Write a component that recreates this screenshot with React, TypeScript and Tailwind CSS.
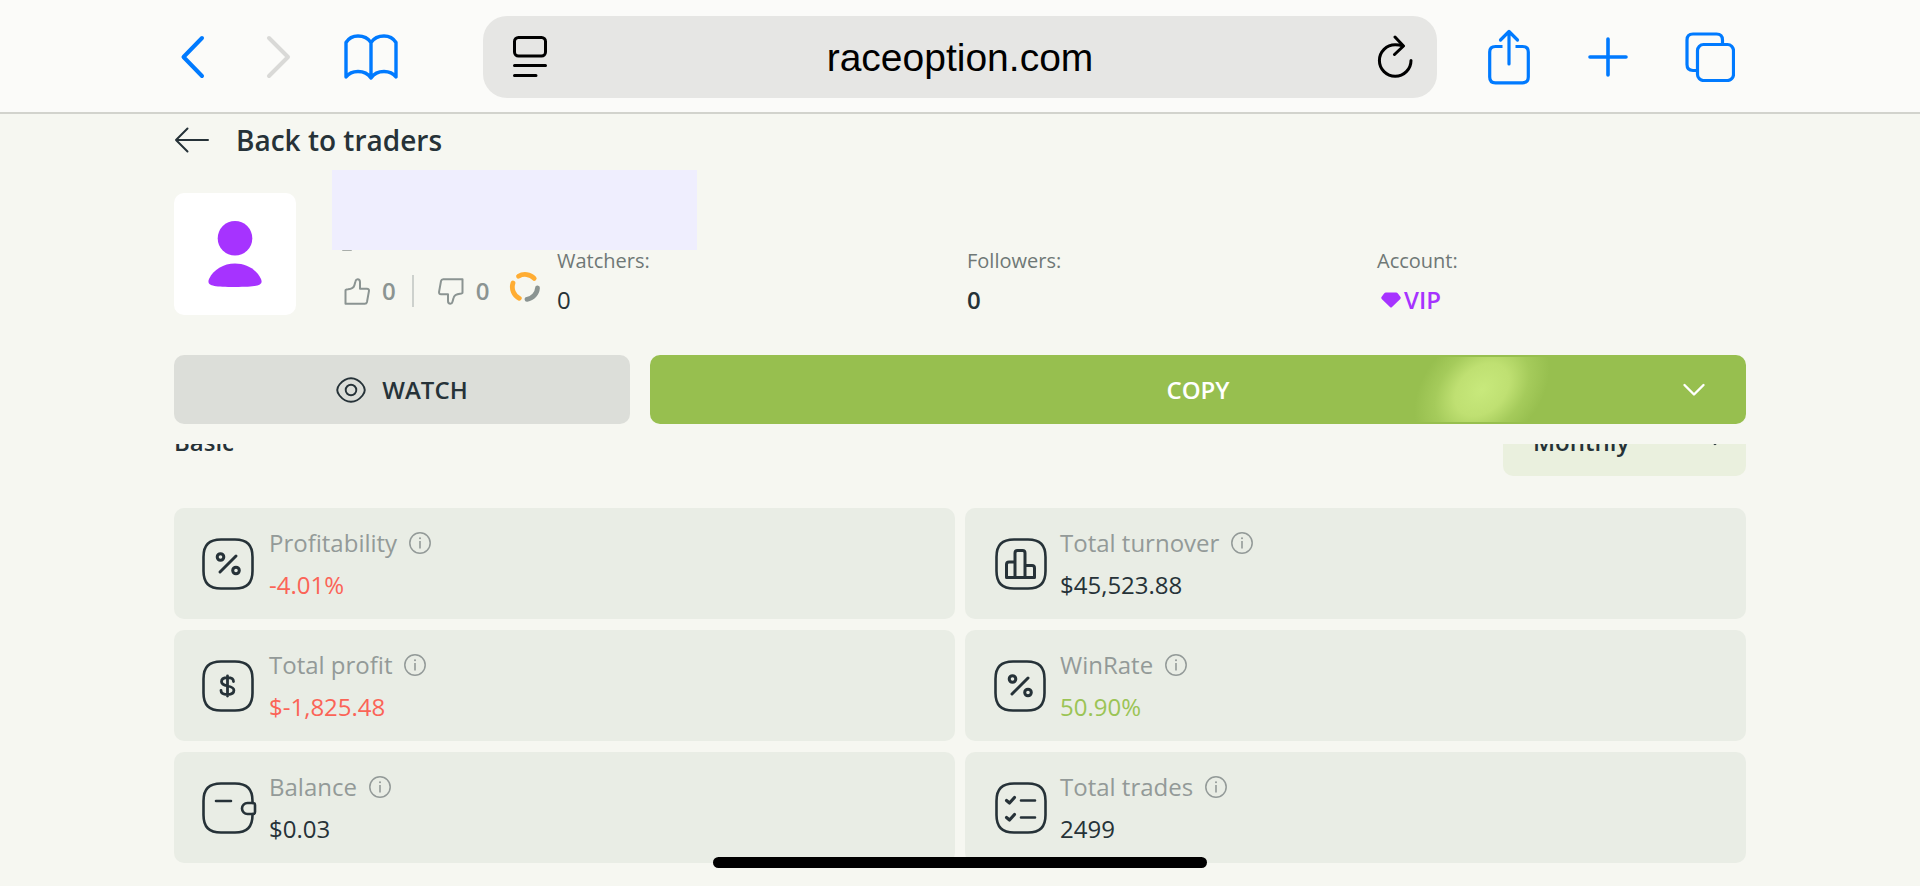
import type { ReactNode } from "react";

const blue = "#007aff";
const ink = "#263238";

function BrowserBar() {
  return (
    <header className="flex h-[114px] items-center border-b-2 border-[#d2d3cd] bg-[#fbfbf9] pl-[174px] pr-[185px] pt-0.5">
      <button aria-label="Back" className="shrink-0">
        <svg width="36" height="50" viewBox="0 0 36 50" fill="none" stroke={blue} strokeWidth="4" strokeLinecap="round" strokeLinejoin="round">
          <path d="M28 6 9.500 25l18.500 19" />
        </svg>
      </button>
      <button aria-label="Forward" className="ml-[51px] shrink-0">
        <svg width="36" height="50" viewBox="0 0 36 50" fill="none" stroke="#d9d9d7" strokeWidth="4" strokeLinecap="round" strokeLinejoin="round">
          <path d="m8 6 19 19L8 44" />
        </svg>
      </button>
      <button aria-label="Bookmarks" className="ml-[47px] shrink-0">
        <svg width="54" height="46" viewBox="0 0 54 46" fill="none" stroke={blue} strokeWidth="3.4" strokeLinecap="round" strokeLinejoin="round">
          <path d="M27 8.500C24 4 19 2 14 2S4.500 4.500 2 8.500V43c3-4 7-5.500 12-5.500s10 2 13 6.500c3-4.500 8-6.500 13-6.500s9 1.500 12 5.500V8.500C49.500 4.500 45 2 40 2s-10 2-13 6.500V44" />
        </svg>
      </button>
      <div className="ml-[85px] flex h-[82px] flex-1 items-center justify-between rounded-[24px] bg-[#e6e6e4] pl-[30px] pr-6">
        <button aria-label="Page settings">
          <svg width="34" height="42" viewBox="0 0 34 42" fill="none" stroke="#000" strokeWidth="3" strokeLinecap="round">
            <rect x="1.500" y="1.500" width="31" height="18.500" rx="4" />
            <path d="M1.500 29.500h31M1.500 39.500h21.500" />
          </svg>
        </button>
        <span className="pr-1 pt-0.5 font-['Liberation_Sans',sans-serif] text-[39px] leading-[48px] text-black">raceoption.com</span>
        <button aria-label="Reload">
          <svg width="36" height="44" viewBox="0 0 36 44" fill="none" stroke="#000" strokeWidth="3" strokeLinecap="round" strokeLinejoin="round">
            <path d="M34 25.500a15.800 15.800 0 1 1-15.800-15.800c2.500 0 5 .3 7.500 1.200" />
            <path d="m18 2 8.500 9-9 8.500" />
          </svg>
        </button>
      </div>
      <button aria-label="Share" className="ml-[51px] shrink-0">
        <svg width="42" height="56" viewBox="0 0 42 56" fill="none" stroke={blue} strokeWidth="3.200" strokeLinecap="round" strokeLinejoin="round">
          <path d="M14.500 17.500H7.500Q1.700 17.500 1.700 23v25q0 5.800 5.800 5.800h27q5.800 0 5.800-5.800V23q0-5.500-5.800-5.500H27.500" strokeLinecap="butt" />
          <path d="M21 35V3M12.500 11 21 2.500l8.500 8.500" />
        </svg>
      </button>
      <button aria-label="New tab" className="ml-[58px] shrink-0">
        <svg width="40" height="40" viewBox="0 0 40 40" stroke={blue} strokeWidth="3.600" strokeLinecap="round">
          <path d="M20 2v36M2 20h36" />
        </svg>
      </button>
      <button aria-label="Tabs" className="ml-[57px] shrink-0">
        <svg width="50" height="50" viewBox="0 0 50 50" fill="none" stroke={blue} strokeWidth="3.200">
          <path d="M37.500 12.500V8q0-6-6-6H8Q2 2 2 8v24.500q0 6 6 6h4.500" />
          <rect x="12.500" y="12.500" width="36" height="36" rx="6" />
        </svg>
      </button>
    </header>
  );
}

function TileIcon({ x = 0, children }: { x?: number; children: ReactNode }) {
  return (
    <svg width="56" height="54" viewBox="0 0 56 54" fill="none" stroke={ink} strokeWidth="2.600" strokeLinecap="round" strokeLinejoin="round" className="shrink-0">
      <g transform={`translate(${x} 1)`}>{children}</g>
    </svg>
  );
}

function TileBox() {
  return <path d="M19 1.500h14C45 1.500 50.500 7 50.500 19v14c0 12-5.500 17.500-17.500 17.500H19C7 50.500 1.500 45 1.500 33V19C1.500 7 7 1.500 19 1.500Z" />;
}

function PercentIcon({ x = 0 }: { x?: number }) {
  return (
    <TileIcon x={x}>
      <TileBox />
      <g strokeWidth="3">
        <circle cx="18.500" cy="19" r="3.300" />
        <circle cx="34" cy="32.500" r="3.300" />
        <path d="M34 18 18 34" />
      </g>
    </TileIcon>
  );
}

function DollarIcon() {
  return (
    <TileIcon>
      <TileBox />
      <path strokeWidth="2.800" d="M25.500 16v20M31.500 21.500c0-2.500-2.500-3.800-6-3.800s-6 1.500-6 4c0 5.800 12.400 2.800 12.400 8.600 0 2.600-2.600 4.200-6.400 4.200s-6.500-1.500-6.500-4" />
    </TileIcon>
  );
}

function WalletIcon() {
  return (
    <TileIcon>
      <path d="M50.500 21v-2C50.500 7 45 1.500 33 1.500H19C7 1.500 1.500 7 1.500 19v14C1.500 45 7 50.500 19 50.500h14C45 50.500 50.500 45 50.500 33v-1M14 19h15" />
      <path d="M45.500 21h5.500q2 0 2 2v7q0 2-2 2h-5.500a5.500 5.500 0 0 1 0-11Z" />
    </TileIcon>
  );
}

function BarsIcon() {
  return (
    <TileIcon x={2}>
      <TileBox />
      <path strokeWidth="3" d="M11.500 39.500h28V30q0-2.500-2.500-2.500h-7V15q0-2.500-2.500-2.500h-5Q20 12.500 20 15v24.500M20 24h-6q-2.500 0-2.500 2.500v13M30 27v12.500" />
    </TileIcon>
  );
}

function ChecklistIcon() {
  return (
    <TileIcon x={2}>
      <TileBox />
      <path d="M26 18.500h14M26 35.500h14" />
      <path strokeWidth="3.200" d="m11.500 18.500 3 2.500 5-5.500M11.500 35.500l3 2.500 5-5.500" />
    </TileIcon>
  );
}

function InfoIcon() {
  return (
    <svg width="22" height="22" viewBox="0 0 22 22" fill="none" stroke="#939a98" strokeWidth="1.500">
      <circle cx="11" cy="11" r="10.200" />
      <path d="M11 9v7.500" strokeWidth="1.600" />
      <circle cx="11" cy="6.300" r="1" fill="#939a98" stroke="none" />
    </svg>
  );
}

type Metric = { label: string; value: string; tone: string; icon: ReactNode };

const metrics: Metric[] = [
  { label: "Profitability", value: "-4.01%", tone: "text-[#fb6457]", icon: <PercentIcon /> },
  { label: "Total turnover", value: "$45,523.88", tone: "text-[#263238]", icon: <BarsIcon /> },
  { label: "Total profit", value: "$-1,825.48", tone: "text-[#fb6457]", icon: <DollarIcon /> },
  { label: "WinRate", value: "50.90%", tone: "text-[#9bc455]", icon: <PercentIcon x={1} /> },
  { label: "Balance", value: "$0.03", tone: "text-[#263238]", icon: <WalletIcon /> },
  { label: "Total trades", value: "2499", tone: "text-[#263238]", icon: <ChecklistIcon /> },
];

function MetricCard({ label, value, tone, icon }: Metric) {
  return (
    <div className="flex h-[111px] items-center gap-[11px] rounded-[10px] bg-[#e9ede5] pl-7">
      {icon}
      <div className="flex flex-col gap-2">
        <div className="flex items-center gap-3 text-[24px] leading-[34px] text-[#939a98]">
          {label}
          <button aria-label={`About ${label}`}>
            <InfoIcon />
          </button>
        </div>
        <div className={`text-[24px] leading-[34px] ${tone}`}>{value}</div>
      </div>
    </div>
  );
}

function Stat({ label, children }: { label: string; children: ReactNode }) {
  return (
    <div className="flex flex-col gap-2">
      <span className="text-[20px] leading-7 text-[#6f7876]">{label}</span>
      <span className="flex items-center text-[24px] leading-[34px] text-[#263238]">{children}</span>
    </div>
  );
}

const thumb = "M1.500 12.500v13.300h19.300c1.300 0 1.900-.7 2.200-1.900l1.900-10.500c.3-1.700-.4-2.600-2-2.600H16V4c0-1.900-1-2.800-2.400-2.800-1.300 0-1.800.8-2.100 2L10.400 7.200C9.800 9.600 7 11 4 11.300c-1.600.1-2.500.3-2.500 1.200Z";

function Profile() {
  return (
    <section className="relative mt-7 flex h-[124px] items-end">
      <div className="flex size-[122px] shrink-0 items-center justify-center self-start rounded-[10px] bg-white">
        <svg width="54" height="66" viewBox="0 0 54 66" fill="#a633ff">
          <circle cx="27" cy="17.300" r="17.300" />
          <path d="M27 42.500c11.500 0 21.500 6 26 15.500 2.500 6.500-3 8-26 8S-1.500 64.500 1 58c4.500-9.500 14.500-15.500 26-15.500Z" />
        </svg>
      </div>
      <div className="flex w-[261px] shrink-0 items-center pb-1.5 pl-12 text-[24px] font-semibold leading-[34px] text-[#8b9492]">
        <button className="flex items-center gap-3" aria-label="Likes">
          <svg width="26" height="27" viewBox="0 0 26 27" fill="none" stroke="currentColor" strokeWidth="2" strokeLinejoin="round">
            <path d={thumb} />
          </svg>
          0
        </button>
        <span className="ml-4 h-8 w-0.5 bg-[#cdd1cd]" />
        <button className="ml-6 flex items-center gap-3" aria-label="Dislikes">
          <svg width="26" height="27" viewBox="0 0 26 27" fill="none" stroke="currentColor" strokeWidth="2" strokeLinejoin="round">
            <path d={thumb} transform="rotate(180 13 13.500)" />
          </svg>
          0
        </button>
        <svg width="32" height="32" viewBox="0 0 32 32" fill="none" strokeWidth="4.800" strokeLinecap="round" className="mb-2 ml-5 shrink-0">
          <path d="M9.500 5.200a12.600 12.600 0 0 1 15.700 2.200" stroke="#ffad33" />
          <path d="M4 12a12.600 12.600 0 0 0 6.300 15.300" stroke="#ffad33" />
          <path d="M28.500 16.800a12.600 12.600 0 0 1-10.500 11.600" stroke="#8b9492" />
        </svg>
      </div>
      <div className="grid flex-1 grid-cols-[1fr_1fr_369px]">
        <Stat label="Watchers:">0</Stat>
        <Stat label="Followers:">
          <b className="font-semibold">0</b>
        </Stat>
        <Stat label="Account:">
          <svg width="20" height="16" viewBox="0 0 20 16" fill="#a633ff" className="ml-1">
            <path d="M5 .5h10q1.200 0 1.900 1L19.500 5q.6 1-.2 2L11 15q-1 1-2 0L.7 7Q-.1 6 .5 5l2.600-3.500Q3.800.5 5 .5Z" />
          </svg>
          <span className="ml-[3px] font-semibold text-[#a633ff]">VIP</span>
        </Stat>
      </div>
      <div className="absolute -top-[23px] left-[158px] h-20 w-[365px] bg-[#efeefe]">
        <span className="absolute left-2.5 top-20 h-px w-2.5 rounded-b-full bg-[#a9aeaa]" />
      </div>
    </section>
  );
}

function Actions() {
  return (
    <div className="mt-[38px] flex h-[69px] gap-5">
      <button className="flex w-[456px] shrink-0 items-center justify-center gap-4 rounded-[10px] bg-[#dcded9] text-[24px] font-semibold text-[#263238]">
        <svg width="30" height="26" viewBox="0 0 30 26" fill="none" stroke={ink} strokeWidth="1.900">
          <path d="M15 1.200c4.500 0 8 2 11.500 6.300 2.800 3.400 2.800 7.600 0 11C23 22.800 19.500 24.800 15 24.800S7 22.800 3.500 18.500c-2.800-3.400-2.800-7.600 0-11C7 3.200 10.500 1.200 15 1.200Z" />
          <circle cx="15" cy="13" r="5.300" />
        </svg>
        WATCH
      </button>
      <button className="relative flex flex-1 items-center justify-center overflow-hidden rounded-[10px] bg-[#97bf4f] text-[24px] font-semibold text-white">
        <span className="absolute inset-y-0.5 right-[200px] w-[128px] -skew-x-[18deg] bg-[radial-gradient(64px_66px_at_center,#c8e97c,#bfe072_40%,#a5cb5b_70%,#97bf4f)]" />
        <span className="relative">COPY</span>
        <svg width="24" height="14" viewBox="0 0 24 14" fill="none" stroke="#fff" strokeWidth="2.400" strokeLinecap="round" strokeLinejoin="round" className="absolute right-10">
          <path d="m2.500 2 9.500 9.500L21.500 2" />
        </svg>
      </button>
    </div>
  );
}

export default function App() {
  return (
    <div className="flex min-h-screen flex-col bg-[#f6f7f1] font-['Open_Sans','Noto_Sans',sans-serif]">
      <BrowserBar />
      <main className="px-[174px]">
        <a href="#traders" className="flex h-[51px] items-center gap-[26px] text-[28px] font-semibold text-[#263238]">
          <svg width="36" height="26" viewBox="0 0 36 26" fill="none" stroke={ink} strokeWidth="2" strokeLinecap="round" strokeLinejoin="round">
            <path d="M34 13H2M13.500 1.500 2 13l11.500 11.500" />
          </svg>
          Back to traders
        </a>
        <Profile />
        <Actions />
        <section className="mt-5 overflow-hidden">
          <div className="-mt-[37px] flex h-[69px] items-center justify-between">
            <h2 className="text-[24px] font-semibold text-[#263238]">Basic</h2>
            <div className="relative h-full w-[243px]">
              <select aria-label="Period" defaultValue="Monthly" className="size-full appearance-none rounded-[10px] bg-[#eaf0de] pl-[30px] text-[24px] font-semibold text-[#263238]">
                <option>Monthly</option>
              </select>
              <svg width="20" height="12" viewBox="0 0 20 12" fill="none" stroke={ink} strokeWidth="2.400" strokeLinecap="round" strokeLinejoin="round" className="absolute right-[21px] top-[27px]">
                <path d="m2 2 8 8 8-8" />
              </svg>
            </div>
          </div>
          <div className="mt-8 grid grid-cols-2 gap-x-2.5 gap-y-[11px]">
            {metrics.map((m) => (
              <MetricCard key={m.label} {...m} />
            ))}
          </div>
        </section>
      </main>
      <div className="fixed bottom-[18px] left-1/2 h-[11px] w-[494px] -translate-x-1/2 rounded-full bg-black" />
    </div>
  );
}
